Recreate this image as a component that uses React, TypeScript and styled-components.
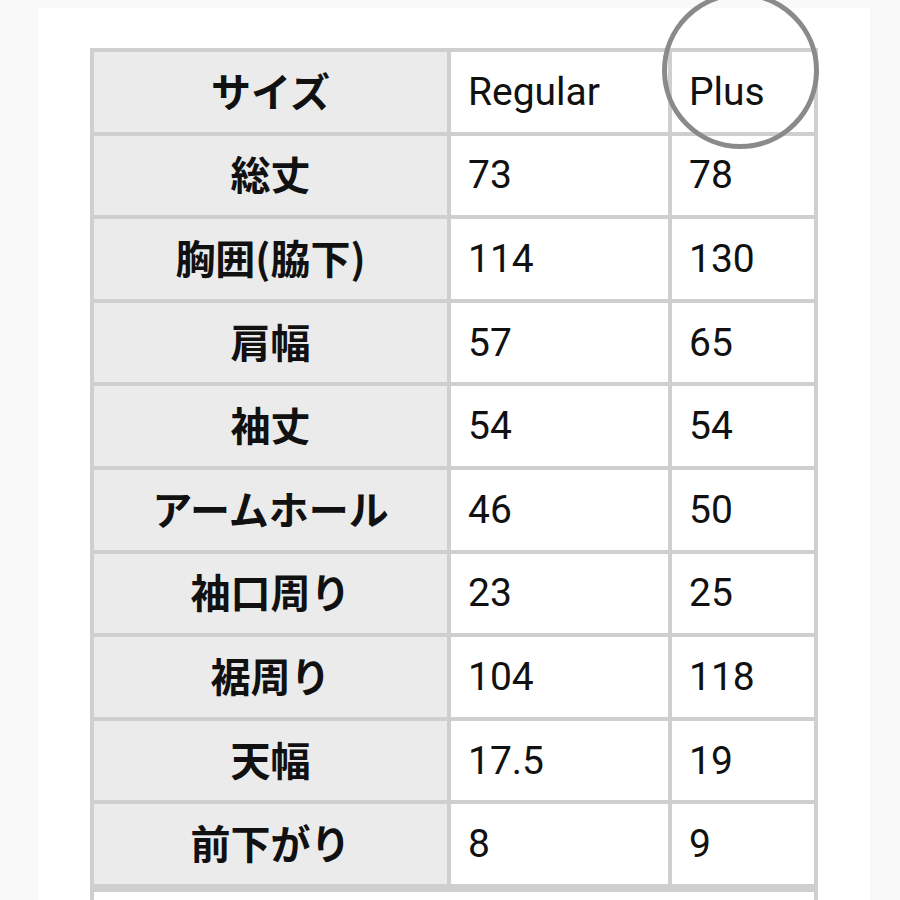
import React from "react";
import styled, { createGlobalStyle } from "styled-components";

const GlobalStyle = createGlobalStyle`
  html, body {
    margin: 0;
    padding: 0;
    background: #f9f9f9;
    overflow: hidden;
  }
`;

const Page = styled.div`
  height: 900px;
  padding: 8px 30px 0 38px;
  box-sizing: border-box;
`;

const Sheet = styled.div`
  position: relative;
  height: 100%;
  background: #ffffff;
  padding: 40px 0 0 52px;
  box-sizing: border-box;
`;

const SizeTable = styled.table`
  border-collapse: separate;
  border-spacing: 4px;
  background: #cfcfcf;
  table-layout: fixed;
  width: 728px;
`;

const LabelCell = styled.th`
  width: 353px;
  height: 79.6px;
  padding: 0 0 4px;
  box-sizing: border-box;
  background: #ebebeb;
  color: #111111;
  font-family: "Noto Sans CJK JP", "Noto Sans", sans-serif;
  font-weight: 700;
  font-size: 40px;
  text-align: center;
  vertical-align: middle;
`;

const ValueCell = styled.td<{ $w: number }>`
  width: ${(p) => p.$w}px;
  height: 79.6px;
  padding: 0 0 0 17px;
  box-sizing: border-box;
  background: #ffffff;
  color: #111111;
  font-family: Roboto, "Noto Sans", sans-serif;
  font-weight: 400;
  font-size: 39px;
  text-align: left;
  vertical-align: middle;
`;

const NoteCell = styled.td`
  height: 80px;
  background: #ffffff;
`;

const Ring = styled.div`
  position: absolute;
  left: 624px;
  top: -16px;
  width: 157px;
  height: 157px;
  box-sizing: border-box;
  border: 5px solid #8a8a8a;
  border-radius: 50%;
  pointer-events: none;
`;

const rows: [string, string, string][] = [
  ["サイズ", "Regular", "Plus"],
  ["総丈", "73", "78"],
  ["胸囲(脇下)", "114", "130"],
  ["肩幅", "57", "65"],
  ["袖丈", "54", "54"],
  ["アームホール", "46", "50"],
  ["袖口周り", "23", "25"],
  ["裾周り", "104", "118"],
  ["天幅", "17.5", "19"],
  ["前下がり", "8", "9"],
];

export default function App() {
  return (
    <>
      <GlobalStyle />
      <Page>
        <Sheet>
          <SizeTable>
            <tbody>
              {rows.map(([label, regular, plus]) => (
                <tr key={label}>
                  <LabelCell>{label}</LabelCell>
                  <ValueCell $w={217}>{regular}</ValueCell>
                  <ValueCell $w={142}>{plus}</ValueCell>
                </tr>
              ))}
            </tbody>
          </SizeTable>
          <SizeTable>
            <tbody>
              <tr>
                <NoteCell />
              </tr>
            </tbody>
          </SizeTable>
          <Ring />
        </Sheet>
      </Page>
    </>
  );
}
